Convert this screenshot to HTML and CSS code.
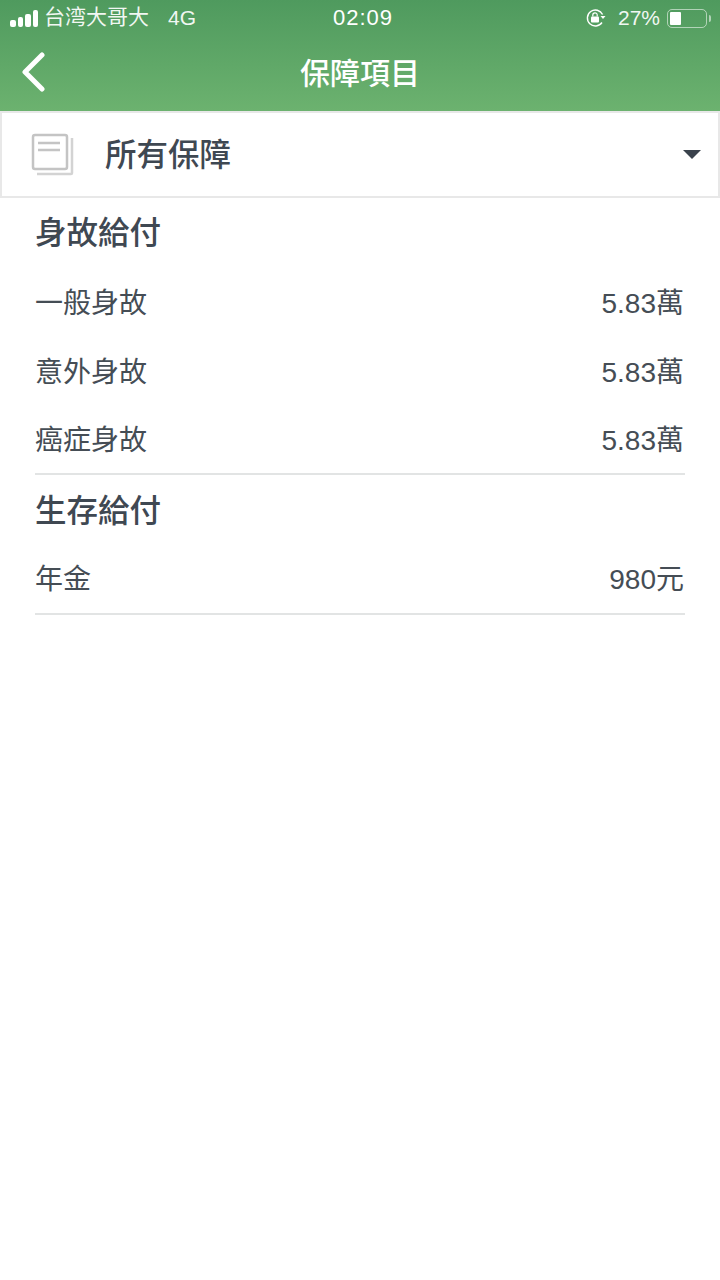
FILE: index.html
```html
<!DOCTYPE html>
<html lang="zh-Hant">
<head>
    <meta charset="UTF-8">
    <title>保障項目</title>
    <link rel="stylesheet" href="styles.css">
</head>
<body>
    <header class="top">
        <div class="status">
            <div class="status-left">
                <span class="signal"><i></i><i></i><i></i><i></i></span>
                <span class="carrier">台湾大哥大</span>
                <span class="net">4G</span>
            </div>
            <div class="clock">02:09</div>
            <div class="status-right">
                <svg class="lock" width="22" height="20" viewBox="0 0 22 20">
                    <path d="M17 14.500A8 8 0 1 1 17.600 6.500" fill="none" stroke="#fff" stroke-width="1.400"/>
                    <path d="M15.500 8h5l-2.500 3z" fill="#fff"/>
                    <rect x="6" y="8.500" width="8" height="6" rx="1" fill="#fff"/>
                    <path d="M7.800 8.500V7a2.200 2.200 0 0 1 4.400 0v1.500" fill="none" stroke="#fff" stroke-width="1.200"/>
                </svg>
                <span class="percent">27%</span>
                <span class="battery"><i></i></span>
                <span class="battery-tip"></span>
            </div>
        </div>
        <div class="nav">
            <svg class="back" width="26" height="40" viewBox="0 0 26 40">
                <path d="M22 3L5 20l17 17" fill="none" stroke="#fff" stroke-width="5" stroke-linecap="round" stroke-linejoin="round"/>
            </svg>
            <h1>保障項目</h1>
        </div>
    </header>

    <div class="picker">
        <svg class="doc" width="44" height="44" viewBox="0 0 44 44">
            <path d="M41 5v35a1 1 0 0 1-1 1H6" fill="none" stroke="#d3d3d3" stroke-width="2.500"/>
            <rect x="2" y="2" width="34" height="34" rx="2" fill="#fff" stroke="#c4c4c4" stroke-width="2.500"/>
            <path d="M7 10h22M7 17h22" stroke="#c4c4c4" stroke-width="2.500"/>
        </svg>
        <span class="picker-label">所有保障</span>
        <span class="caret"></span>
    </div>

    <main class="content">
        <section class="group">
            <h2>身故給付</h2>
            <div class="row"><span>一般身故</span><span>5.83萬</span></div>
            <div class="row"><span>意外身故</span><span>5.83萬</span></div>
            <div class="row"><span>癌症身故</span><span>5.83萬</span></div>
        </section>
        <section class="group">
            <h2>生存給付</h2>
            <div class="row"><span>年金</span><span>980元</span></div>
        </section>
    </main>
</body>
</html>
```

FILE: styles.css
```css
* {
    box-sizing: border-box;
}

body {
    margin: 0;
    height: 1280px;
    background-color: #fff;
    color: #454d55;
    font-family: "Liberation Sans", "Noto Sans CJK TC", sans-serif;
    overflow: hidden;
}

.top {
    height: 111px;
    background: linear-gradient(#4f9a5e, #6cb26f);
    color: #fff;
}

.status {
    height: 36px;
    display: grid;
    grid-template-columns: 1fr auto 1fr;
    align-items: center;
    padding: 0 10px;
}

.status-left, .status-right {
    display: flex;
    align-items: center;
}

.status-right {
    justify-content: flex-end;
    margin-right: -1px;
}

.signal {
    display: flex;
    align-items: flex-end;
    gap: 2px;
    margin-right: 6px;
}

.signal i {
    width: 5.500px;
    background-color: #fff;
    border-radius: 2px;
}

.signal i:nth-child(1) { height: 7px; }
.signal i:nth-child(2) { height: 10px; }
.signal i:nth-child(3) { height: 13px; }
.signal i:nth-child(4) { height: 17px; }

.carrier {
    font-size: 21px;
    line-height: 30px;
    margin-top: -3px;
    opacity: 0.92;
}

.net {
    font-size: 21px;
    margin-left: 19px;
    opacity: 0.92;
}

.clock {
    font-size: 22px;
    letter-spacing: 1px;
    padding-left: 6px;
}

.lock {
    margin-right: 11px;
}

.percent {
    font-size: 21px;
    margin-right: 7px;
    opacity: 0.92;
}

.battery {
    width: 40px;
    height: 19px;
    padding: 2px;
    border: 1.500px solid rgba(255, 255, 255, 0.55);
    border-radius: 5px;
    display: block;
}

.battery i {
    display: block;
    width: 11px;
    height: 100%;
    background-color: #fff;
    border-radius: 1px;
}

.battery-tip {
    width: 2px;
    height: 7px;
    margin-left: 2px;
    background-color: rgba(255, 255, 255, 0.55);
    border-radius: 0 2px 2px 0;
}

.nav {
    height: 75px;
    display: flex;
    align-items: center;
    justify-content: center;
    position: relative;
}

.back {
    position: absolute;
    left: 20px;
    top: 16px;
}

.nav h1 {
    margin: 0 0 6px;
    font-size: 30px;
    font-weight: 500;
}

.picker {
    height: 87px;
    display: flex;
    align-items: center;
    padding: 0 20px 0 29px;
    border: 2px solid #e8e8e8;
    background-color: #fff;
}

.doc {
    flex: none;
    margin-right: 30px;
}

.picker-label {
    font-size: 31.500px;
    font-weight: 500;
    color: #3f4852;
    flex: 1;
    padding-bottom: 6px;
}

.caret {
    width: 0;
    height: 0;
    border-left: 9px solid transparent;
    border-right: 9px solid transparent;
    border-top: 9px solid #3a424c;
    margin-bottom: 1px;
    margin-right: -3px;
}

.content {
    padding: 0 35px;
}

.group {
    border-bottom: 2px solid #e2e4e4;
}

.group + .group {
    padding-bottom: 2px;
}

.group h2 {
    margin: 0;
    height: 69px;
    padding-bottom: 6px;
    display: flex;
    align-items: center;
    font-size: 31.500px;
    font-weight: 500;
    color: #3f4852;
}

.group + .group h2 {
    height: 68px;
    padding-bottom: 2px;
}

.row {
    height: 68.500px;
    display: flex;
    align-items: center;
    justify-content: space-between;
    font-size: 28px;
    padding-right: 1px;
}
```
